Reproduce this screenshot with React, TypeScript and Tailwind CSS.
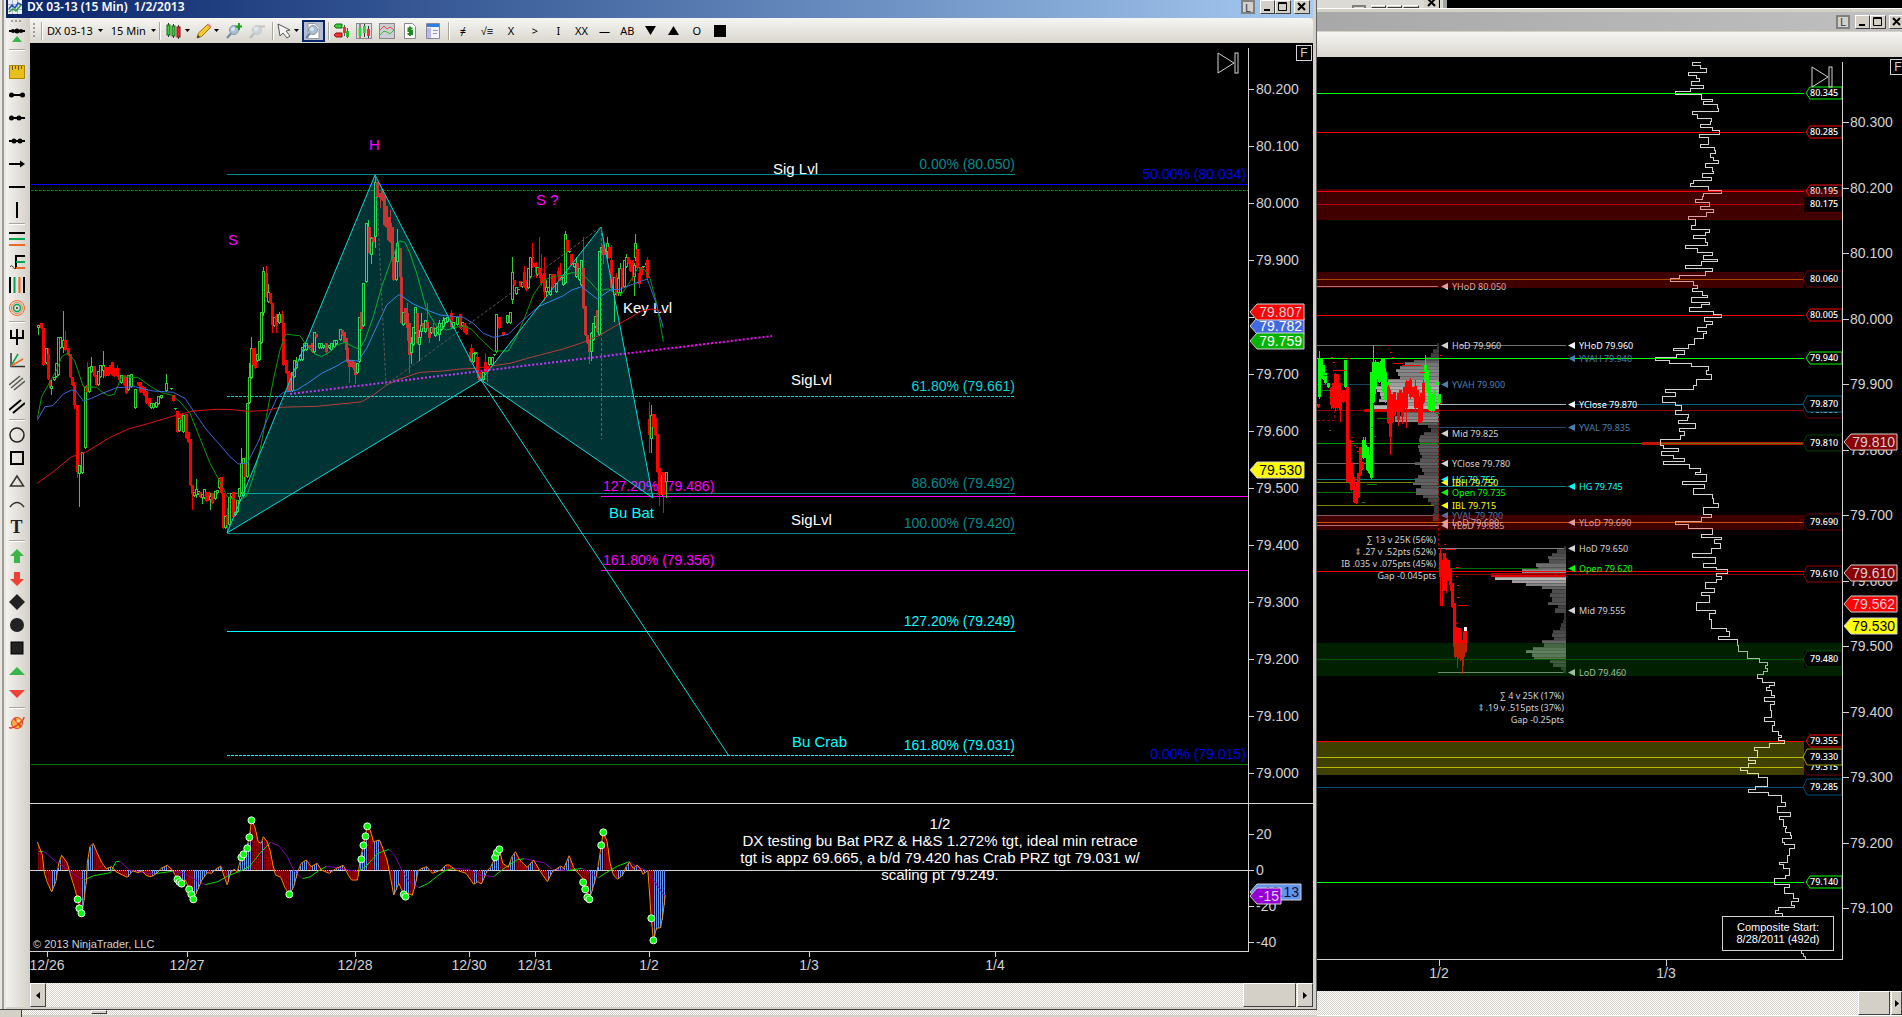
import type { ReactNode } from "react";

type Point = [number, number];
type Projection = (x: number, y: number) => Point;

const LINE_WHITE = "#d3d3d3";

// Recorded samples are in thirds of a pixel, relative to each panel's origin.
const at =
  (ox: number, oy: number, sx = 3, sy = 3): Projection =>
  (x, y) => [ox + x / sx, oy + y / sy];

const early = at(20, 130);
const late = at(400, 180);
const oscillator = at(20, 780, 2.376, 3);
const session = at(1316, 330);

function parse(raw: string): number[][] {
  return raw
    .trim()
    .split(/\s+/)
    .map((pair) => pair.split(",").map(Number));
}

function project(raw: string, to: Projection): Point[] {
  return parse(raw).map(([x, y]) => to(x, y));
}

function toPoints(points: Point[]) {
  return points.map(([x, y]) => `${x.toFixed(1)},${y.toFixed(1)}`).join(" ");
}

/* ---------- left chart data ---------- */

// g|r x,bodyTop,bodyBottom[,wickTop,wickBottom]
const EARLY_BARS = `
g55,585,595,585,613 r64,580,595 r70,595,705 g77,655,700 r83,672,748,655,748 r89,750,775 g94,768,776,750,793 g101,740,750 g107,700,740 g113,622,735
g120,622,655 g130,630,655,543,665 r136,630,660,603,660 r143,655,675 r150,672,742 r157,740,765 r163,765,825,755,835 r171,825,1025,825,1040
g178,1005,1032,1005,1128 g187,965,1030 g195,770,955 r202,765,785,697,785 g208,710,787 g214,707,727,682,727 r221,707,737 r227,735,765
g234,722,765 g240,705,740 g250,705,722,662,740 r256,712,738 r263,710,735 r270,706,730 r275,697,735 r283,713,738 r292,715,738,705,738
r298,735,750 g304,735,760 r311,735,765 r317,740,788 g325,735,780 g332,732,770 g346,778,835 r353,755,765 r359,755,785 r366,768,785
r372,770,795 r379,783,818 r386,805,828 g393,818,835 g400,820,835 g408,815,830 g414,797,822 g422,795,803 g438,758,782,732,782
g454,774,776 r460,795,812 g466,834,836 r472,843,905 g478,865,903 r484,852,870 g490,855,905 r497,852,925 r503,905,937 r509,927,1065
r515,1065,1092,1065,1137 g521,1085,1097 g527,1078,1095,1047,1100 g533,1083,1093 r539,1085,1100 g545,1092,1105,1092,1120 g551,1078,1105 r557,1085,1112
r563,1085,1110 g569,1098,1110,1090,1137 r575,1090,1120 g584,1083,1107 g590,1080,1090 g597,1045,1075 r602,1040,1090 r608,1090,1195
g614,1157,1195 r620,1155,1185,1135,1210 g627,1100,1185 g633,1088,1100 r639,1085,1160 g645,1145,1155 g651,1110,1145 g657,1075,1100,1075,1120
g663,998,1090,953,1090 g670,985,1098 r676,998,1040,982,1075 g682,818,1040 g687,742,820,700,820 g692,655,745,622,745 r700,655,705
r706,690,715,655,715 g712,672,693 g718,632,690 g724,545,640 g730,422,550,412,555 r737,430,500,408,500 g743,485,515,462,515
r749,490,520 r755,520,585,520,605 g761,560,587 r767,558,588,552,605 g773,553,577 g778,553,578,545,578 r785,553,580,543,580 r790,580,705
r797,690,730 r803,723,783 r809,730,783 g816,725,783 g822,690,740 g828,695,715,680,715 g840,675,690 g846,650,690 g853,640,660 g859,640,660
r868,645,655 r875,640,665 g881,605,665 r887,612,620 g898,640,655 g904,640,655 g910,645,655 r918,640,665 g926,645,655 g934,640,660
g941,630,650 g948,630,642 g959,597,630 r965,600,615 r971,605,635 r977,625,660 r982,655,695 r988,690,710,690,757 r995,692,712
r1001,697,720 r1006,710,735,710,760 g1012,700,730 g1018,562,695 r1024,545,597 g1030,460,588 g1037,280,455 g1043,290,330,270,335
r1048,290,370 g1054,325,375,320,400 r1060,320,335 g1066,155,320,140,350 r1072,155,202 r1079,190,205,190,230 r1085,178,210 r1091,195,285
r1097,228,290 r1103,260,330 r1109,280,335,240,335 r1115,290,390 r1120,380,450 g1127,360,450 g1132,340,395,297,420 r1139,355,440`;

const LATE_BARS = `
r0,210,290 r4,292,430 g10,395,435 r16,385,430 r22,400,445,370,480 r28,430,525,430,575 g34,490,520,470,548 g40,440,495 g46,380,460
r52,400,490 g58,470,495,450,540 g64,435,457,400,470 r70,430,445 g76,420,455 r82,425,445,370,445 r88,445,475,445,487 g94,440,460 r100,440,460,430,460
g106,445,468 g112,440,460 g118,430,465,420,480 g124,430,450 g130,420,440,410,445 g136,415,430 g142,410,425 r152,400,440,390,445
g160,425,445 g172,412,435 r180,403,445 g186,425,438 r192,430,455 r198,437,463 r209,515,543 r214,505,530,493,540 g220,520,545 g226,515,522
r232,530,580,515,590 r238,575,600 r244,580,602 g250,575,600 r256,545,575,520,575 r262,560,575,560,603 g268,532,555 g275,530,555 g281,522,524
g287,403,515 r297,412,445 r310,455,465 g322,405,430 g329,395,430 g335,275,360,230,370 r341,300,315 g347,320,343 g353,326,328
r360,302,318 g365,305,320 r371,275,320,258,320 r377,300,330 g383,265,325 g389,232,290 r395,230,235,190,262 r403,250,258 r408,260,280,245,290
g412,262,285 r418,265,285,172,290 r424,285,310,222,315 r431,280,335,230,360 g437,320,335,300,345 g444,320,335 g450,283,345 r456,283,320
r462,283,310 g468,310,335 r473,272,285,262,300 r479,285,300,250,300 g490,290,315 g496,163,310,153,310 r502,180,215 g508,213,215
r514,222,255 g521,250,262 g527,248,290,230,290 r532,250,285 g538,265,300 g544,240,315 r549,265,385,172,385 r555,378,465 r561,465,490
r568,485,515,480,548 g574,458,515,455,540 g580,430,480 g586,407,440 r592,390,455 g598,213,465 g604,200,215 r610,195,225,175,250
r615,208,222 g621,190,215,172,235 r628,200,235 r634,240,325,195,325 g641,290,345,290,423 r647,290,340,280,345 g653,295,340,265,345
g659,265,340,248,345 r665,265,320 g671,240,320 g677,232,260,222,262 r683,232,250 r690,240,272 r696,240,270,240,300 g701,255,290,250,345
g706,190,235,162,240 r712,207,265 r718,280,312,260,320 r724,262,285 g730,258,262 g737,250,255 r742,240,293,232,293
r748,717,765,667,815 g754,705,778,675,815 r760,702,740 r766,715,765,702,765 r772,762,875 r778,865,945,865,975 g785,885,945 r790,875,945,875,995
g797,875,905,875,950`;

const AVERAGES = [
  {
    color: "#00a000",
    early:
      "52,865 65,800 90,755 110,720 125,680 145,668 165,695 190,770 230,772 245,785 265,797 283,793 305,740 355,743 375,757 400,775 430,790 455,795 480,815 510,850 540,925 570,1000 600,1055 622,1100 655,1112 680,1098 700,1040 720,960 740,855 760,750 780,660 797,612 820,615 840,617 860,648 885,672 905,680 930,665 950,645 975,637 1000,650 1018,658 1035,630 1060,560 1085,470 1110,400 1138,333",
    late: "0,183 15,187 30,220 50,280 80,390 110,440 140,450 185,437 215,448 240,475 280,513 325,513 350,470 375,410 400,345 430,300 470,288 495,285 515,278 545,280 570,305 595,333 625,327 645,338 665,342 690,305 715,262 735,270 750,295 770,370 790,485",
  },
  {
    color: "#4169e1",
    early:
      "52,870 75,830 98,827 130,792 155,780 168,783 190,813 215,805 240,793 290,773 345,770 375,778 400,783 460,787 495,805 525,850 560,900 600,945 630,980 655,1002 682,1000 715,935 745,860 770,805 790,787 830,780 870,755 905,730 950,708 980,690 1015,693 1040,655 1070,590 1100,525 1135,495",
    late: "0,345 40,372 80,390 120,405 190,412 220,430 250,460 280,472 325,463 370,420 415,380 490,347 515,330 545,320 570,340 592,357 630,330 660,328 700,312 742,297 765,360 790,443",
  },
  {
    color: "#e01010",
    early:
      "52,1060 100,1025 155,980 200,965 265,925 325,897 380,882 470,855 520,843 590,838 640,839 680,844 735,842 780,832 890,829 1000,818 1025,815 1060,795 1100,765 1138,747",
    late: "0,597 60,577 130,573 180,567 230,565 260,560 330,550 400,530 490,507 550,487 600,465 660,430 725,393 755,387 775,390 790,400",
  },
];

const OSC_LINE = `41,186 53,225 58,280 65,308 75,335 85,305 92,250 99,226 112,248 120,285 130,325 137,358 146,400 150,380 158,300 160,250 166,200
174,190 182,215 195,250 205,266 218,260 228,275 240,283 255,292 268,272 280,278 290,272 300,287 312,290 325,280 335,265 350,256 362,270
374,298 384,310 393,300 402,328 412,358 422,330 432,300 445,278 455,280 465,268 477,258 484,285 492,314 500,280 508,268 516,275 526,232
536,215 545,172 550,121 558,140 566,185 573,190 578,170 587,185 595,215 600,250 607,285 620,292 630,325 640,343 650,320 660,275 668,250
680,240 692,260 706,250 716,270 735,280 750,266 768,256 780,285 788,300 802,300 808,240 816,196 825,139 832,150 840,185 854,180 862,205
872,240 880,290 888,345 900,310 912,343 922,340 932,346 940,310 946,272 955,265 966,260 980,280 1000,270 1012,255 1020,255 1035,270
1060,280 1078,313 1088,305 1096,312 1110,272 1118,262 1129,232 1139,208 1147,250 1160,262 1168,232 1177,215 1187,240 1205,262 1220,240
1235,272 1253,305 1265,275 1285,258 1292,265 1305,227 1315,262 1325,278 1335,292 1343,328 1353,358 1362,320 1370,285 1376,240 1381,196
1386,157 1395,185 1402,250 1410,285 1420,298 1432,285 1440,260 1448,247 1457,265 1466,255 1475,268 1480,283 1488,275 1492,270 1500,415
1505,481 1512,445 1522,443 1528,400 1533,345`;

const OSC_SIGNAL = `45,215 55,214 65,222 85,245 110,265 130,285 152,300 175,287 215,278 228,245 237,244 260,270 290,278 320,281 362,274 385,278
410,295 440,314 470,305 495,287 520,275 545,260 570,220 595,187 615,197 635,230 652,275 672,296 690,290 710,272 728,259 750,262 780,270
805,275 825,255 850,220 877,208 890,225 905,265 925,305 948,323 970,310 990,290 1010,272 1030,265 1065,268 1095,285 1125,290 1150,265
1180,240 1198,236 1245,248 1265,268 1300,272 1335,265 1350,275 1375,293 1390,280 1420,258 1448,245 1465,260 1490,272 1505,300 1533,350`;

const OSC_DOTS = `137,358 141,385 146,400 374,298 379,306 384,311 402,328 407,343 412,358 526,232 531,223 540,205 545,172 550,121 640,343
811,238 816,196 821,169 825,139 912,343 916,350 1129,232 1133,218 1139,208 1338,307 1343,328 1348,352 1353,358 1381,196 1386,157
1500,415 1505,481`;

/* ---------- right chart data ---------- */

const SESSION_BARS = `
g8,88,200,62,205 g14,85,115,85,140 g20,105,148 g26,130,160 g37,160,172 r6,222,232 r45,175,225,170,235 r52,160,235 r57,132,200,130,240 r63,132,235 r68,160,225
r73,190,240,160,272 r80,180,215 g87,90,170 r92,170,455 r98,330,440,330,460 r104,400,480 r110,440,470,430,490 r115,470,515 r121,480,518,455,518 r127,430,500
r131,350,435 r137,395,418 g142,330,385,322,385 g148,345,370,320,380 g154,350,420 g159,375,430 g164,125,445 g170,95,215,45,215 g176,100,170,90,190
g182,95,145 g188,98,155 g194,92,150,85,165 g200,85,185 g206,125,210,115,215 g214,155,165 r217,172,280,165,280 r222,230,320,180,372
r228,192,275 r234,185,255 r240,210,240 r246,190,270,190,285 r252,180,240 r257,195,260,190,280 r263,170,235 r270,155,235,150,292 r277,152,190
r283,150,200,145,205 r290,170,200 r296,168,235,150,240 r302,180,230 r308,200,280 r314,190,272 r320,160,215,150,220 g326,105,150,75,150
g332,120,190 g338,170,240 g344,192,243 g350,192,243,180,243 g355,180,225 g362,155,165 g368,192,222
r371,670,740,655,825 r379,700,740,690,825 r384,670,780 r390,690,740,685,785 r397,690,750 r403,715,765,715,780 r408,760,830 r413,820,950 r418,890,980
r422,930,980,920,1010 r427,895,985 r432,905,965,895,990 r437,935,990,930,1028 r442,930,980,905,1005 r447,895,965`;

const SESSION_MARKS = {
  red: "45,82,3 50,95,4 52,120,36 96,85,5 217,45,4 222,66,4 228,80,3 231,99,29 258,105,56 312,127,14 371,75,4 105,321,3 108,333,4 115,345,4 120,350,5 124,363,8 378,390,4 371,220,5 384,643,5 388,658,29 421,710,5 420,738,4 422,765,5 424,802,5 427,826,23 416,880,4",
  green: "18,181,22 40,200,4 20,136,12 183,265,36 166,290,4 40,300,4 175,318,4 154,462,16 138,516,8 170,485,5 128,372,4 330,275,5 360,248,10 172,462,8",
};

// top, bottom, left edge of each volume row
const PROFILE_1 = `40,58,362 58,70,352 70,80,346 80,90,330 90,97,295 97,107,268 107,117,252 117,127,240 127,137,247 137,147,252 147,157,215 157,167,208
167,177,178 177,187,183 187,197,192 197,207,195 207,217,190 217,225,213 225,237,173 237,247,143 247,257,262 257,267,236 267,277,238
277,285,305 285,295,337 295,305,345 305,315,325 315,325,312 325,335,308 335,345,312 345,355,306 355,365,310 365,375,313 375,385,318
385,395,312 395,405,298 405,415,312 415,425,318 425,435,325 435,445,307 445,455,298 455,465,292 465,475,315 475,495,300 495,505,322
505,515,335 515,525,345 525,550,355 550,572,350`;
const PROFILE_2 = `648,658,743 658,668,722 668,678,708 678,688,695 688,700,700 700,710,660 710,718,665 718,728,617 728,740,525 740,750,538
750,760,588 760,768,630 768,778,678 778,790,707 790,800,703 800,815,707 815,825,697 825,835,725 835,848,717 848,870,745 870,880,740
880,890,735 890,900,732 900,910,712 910,920,708 920,930,715 930,940,678 940,950,685 950,960,650 960,970,630 970,980,648 980,990,655
990,1000,702 1000,1010,710 1010,1020,735 1020,1030,740`;

// x held until y, top to bottom
const COMPOSITE: { to: Projection; raw: string }[] = [
  {
    to: at(1640, 50),
    raw: `180,37 157,46 180,55 197,65 143,76 167,84 178,94 152,105 188,115 150,124 105,132 184,146 215,153 190,163 230,174 233,183 157,192 170,203 213,214 211,223 180,232 217,240
237,253 178,262 203,272 205,283 180,292 223,300 226,310 211,321 219,331 233,340 196,350 215,362 220,370 185,380 213,391 160,400 151,409
205,419 244,430 190,438 187,448 166,457 208,468 181,478 220,487 197,499 145,508 166,526 154,538 208,547 196,556 160,565 196,577 200,586
136,595 172,607 215,616 190,626 232,634 184,646 136,655 217,664 196,676 118,685 91,694 160,706 172,715 157,724 187,734 202,742`,
  },
  {
    to: at(1310, 270, 2.649, 3),
    raw: `1010,95 1056,103 1035,112 1003,124 1068,133 1088,142 1043,152 1065,161 1048,172 1025,182 1048,190 1040,203 1018,222 1000,233 962,241
990,252 970,260 913,271 950,280 1010,288 1055,300 1048,312 1063,328 1022,345 1015,356 940,367 968,377 932,396 968,405 983,420 968,432
1002,442 998,450 975,458 1020,474 977,484 990,494 980,506 928,524 935,535 975,543 930,555 962,565 990,573 935,583 1005,595 1032,605
1020,613 1050,634 985,643 1045,655 1015,672 1065,685 1068,700 1080,712 1042,733 1063,742 1035,752 968,762 1000,773 1065,791 1037,800
1088,808 1070,818 1085,835 1062,850 1013,860 1073,879 1042,890`,
  },
  {
    to: at(1310, 560, 2.649, 3),
    raw: `1075,28 1105,38 1075,47 1088,57 1075,67 1047,85 1070,95 1037,106 1057,127 1022,150 1073,160 1058,178 1063,205 1102,212 1110,227
1082,236 1130,255 1133,274 1158,295 1190,305 1210,315 1205,325 1210,332 1200,343 1185,353 1198,365 1230,375 1215,380 1207,390 1220,405
1228,412 1203,422 1228,432 1218,450 1222,472 1202,482 1230,495 1223,513 1240,525 1247,530 1240,540 1255,550 1215,560 1175,570 1185,590 1160,600 1178,608
1160,620 1140,629 1158,638 1187,650 1210,677 1180,687 1160,697 1213,706 1248,725 1258,738 1238,757 1272,768 1243,778 1253,797 1262,805
1257,815 1272,825 1275,835 1250,845 1255,852 1283,865 1270,885 1263,905 1243,913 1252,924 1270,945 1258,955 1228,972 1270,980 1255,1000
1280,1013 1293,1022 1273,1035 1283,1040 1240,1050 1233,1060 1250,1068`,
  },
];

/* ---------- chart primitives ---------- */

function Bars({
  raw,
  to,
  up,
  hollow,
}: {
  raw: string;
  to: Projection;
  up: string;
  hollow: boolean;
}) {
  return (
    <g shapeRendering="crispEdges">
      {raw
        .trim()
        .split(/\s+/)
        .map((entry) => {
          const rising = entry[0] === "g";
          const [x, top, bottom, high = top, low = bottom] = entry.slice(1).split(",").map(Number);
          const [cx, y1] = to(x, top).map(Math.round);
          const y2 = Math.round(to(x, bottom)[1]);
          const wickTop = Math.round(to(x, high)[1]);
          const wickLow = Math.round(to(x, low)[1]);
          const color = rising ? up : "#ff0000";
          const open = hollow && rising && y2 - y1 > 2;
          return (
            <g key={entry}>
              <rect x={cx} y={wickTop} width={1} height={wickLow - wickTop + 1} fill={color} />
              <rect x={cx - 1} y={y1} width={3} height={Math.max(1, y2 - y1)} fill={color} />
              {open && <rect x={cx} y={y1 + 1} width={1} height={y2 - y1 - 2} fill="#000" />}
            </g>
          );
        })}
    </g>
  );
}

function HLine({
  y,
  x1,
  x2,
  color,
  dash,
  width = 1,
}: {
  y: number;
  x1: number;
  x2: number;
  color: string;
  dash?: string;
  width?: number;
}) {
  return (
    <line
      x1={x1}
      x2={x2}
      y1={y + 0.5}
      y2={y + 0.5}
      stroke={color}
      strokeWidth={width}
      strokeDasharray={dash}
      shapeRendering="crispEdges"
    />
  );
}

// Arrow-shaped price marker that points at the axis
function PriceTag({
  x,
  y,
  width,
  label,
  fill,
  color,
}: {
  x: number;
  y: number;
  width: number;
  label: string;
  fill: string;
  color: string;
}) {
  const right = x + width;
  return (
    <g>
      <polygon
        points={`${x},${y} ${x + 7},${y - 8} ${right},${y - 8} ${right},${y + 8} ${x + 7},${y + 8}`}
        fill={fill}
        stroke={LINE_WHITE}
      />
      <text x={right - 2} y={y + 5} textAnchor="end" fill={color}>
        {label}
      </text>
    </g>
  );
}

function SkipIcon({ x, y }: { x: number; y: number }) {
  return (
    <g fill="none" stroke={LINE_WHITE}>
      <path d={`M${x} ${y}l16 10-16 10z`} />
      <rect x={x + 17} y={y} width={3} height={20} />
    </g>
  );
}

/* ---------- left chart ---------- */

const FIB_LEVELS = [
  { y: 174, label: "0.00% (80.050)", color: "#008b8b" },
  { y: 396, label: "61.80% (79.661)", color: "#00d7d7", dash: "3 1" },
  { y: 493, label: "88.60% (79.492)", color: "#008b8b" },
  { y: 533, label: "100.00% (79.420)", color: "#008b8b" },
  { y: 631, label: "127.20% (79.249)", color: "#00ffff" },
  { y: 755, label: "161.80% (79.031)", color: "#00ffff", dash: "3 1" },
];

const NOTES = [
  { x: 369, y: 150, text: "H", color: "#ff00ff" },
  { x: 228, y: 245, text: "S", color: "#ff00ff" },
  { x: 536, y: 205, text: "S ?", color: "#ff00ff" },
  { x: 773, y: 174, text: "Sig Lvl", color: "#ffffff" },
  { x: 791, y: 385, text: "SigLvl", color: "#ffffff" },
  { x: 791, y: 525, text: "SigLvl", color: "#ffffff" },
  { x: 623, y: 313, text: "Key Lvl", color: "#ffffff" },
  { x: 609, y: 518, text: "Bu Bat", color: "#00ffff" },
  { x: 792, y: 747, text: "Bu Crab", color: "#00ffff" },
];

const COMMENT = [
  "1/2",
  "DX testing bu Bat PRZ & H&S 1.272% tgt, ideal min retrace",
  "tgt is appz 69.665, a b/d 79.420 has Crab PRZ tgt 79.031 w/",
  "scaling pt 79.249.",
];

const DATES: [string, number][] = [
  ["12/26", 47],
  ["12/27", 187],
  ["12/28", 355],
  ["12/30", 469],
  ["12/31", 535],
  ["1/2", 649],
  ["1/3", 809],
  ["1/4", 995],
];

function OscillatorPlot() {
  const line = project(OSC_LINE, oscillator);
  const signal = project(OSC_SIGNAL, oscillator);
  const zero = 870;
  const columns: ReactNode[] = [];

  for (let x = 38, i = 0; x < 665; x += 2) {
    while (i < line.length - 2 && line[i + 1][0] < x) i++;
    const [[ax, ay], [bx, by]] = [line[i], line[i + 1]];
    const y = Math.round(ay + ((by - ay) * Math.min(1, (x - ax) / (bx - ax))));
    columns.push(
      <rect
        key={x}
        x={x}
        y={Math.min(y, zero)}
        width={1}
        height={Math.abs(y - zero)}
        fill={by < ay ? "#6495ed" : "#8b0000"}
      />,
    );
  }

  return (
    <g>
      <HLine y={zero} x1={30} x2={1248} color={LINE_WHITE} />
      <g shapeRendering="crispEdges">{columns}</g>
      {signal.slice(1).map(([x, y], i) => (
        <line
          key={x}
          x1={signal[i][0]}
          y1={signal[i][1]}
          x2={x}
          y2={y}
          stroke={y < signal[i][1] ? "#00e000" : "#8000b0"}
        />
      ))}
      <polyline points={toPoints(line)} fill="none" stroke="#ff8c00" />
      {project(OSC_DOTS, oscillator).map(([x, y]) => (
        <circle key={`${x},${y}`} cx={x} cy={y} r={3.5} fill="#00ff00" stroke="#e8ffe8" />
      ))}
    </g>
  );
}

function PriceChart() {
  return (
    <svg
      viewBox="30 43 1283 940"
      className="block w-full bg-black font-['Liberation_Sans',Arial,sans-serif] text-[14px]"
      role="img"
      aria-label="DX 03-13 15 minute chart"
    >
      <HLine y={184} x1={31} x2={1248} color="#0000ff" />
      <HLine y={190} x1={31} x2={1248} color="#008000" dash="3 1" />
      <HLine y={764} x1={31} x2={1248} color="#008000" />
      {FIB_LEVELS.map((l) => (
        <HLine key={l.label} y={l.y} x1={227} x2={1015} color={l.color} dash={l.dash} />
      ))}
      <HLine y={496} x1={601} x2={1248} color="#ff00ff" />
      <HLine y={570} x1={601} x2={1248} color="#ff00ff" />

      {NOTES.map((n) => (
        <text key={`${n.x}-${n.y}`} x={n.x} y={n.y} fill={n.color} className="text-[15px]">
          {n.text}
        </text>
      ))}
      <g fill="#ff00ff">
        <text x={603} y={491}>127.20% (79.486)</text>
        <text x={603} y={565}>161.80% (79.356)</text>
      </g>

      <Bars raw={EARLY_BARS} to={early} up="#32cd32" hollow />
      <Bars raw={LATE_BARS} to={late} up="#32cd32" hollow />
      {AVERAGES.map((a) => (
        <polyline
          key={a.color}
          points={toPoints([...project(a.early, early), ...project(a.late, late)])}
          fill="none"
          stroke={a.color}
        />
      ))}
      <line x1={290} y1={394} x2={772} y2={336} stroke="#ff00ff" strokeWidth={2} strokeDasharray="2 2" />

      {/* harmonic pattern */}
      <g fill="#00ffff33" stroke="#00dcdc">
        <polygon points="227,533 375,175 481,380" />
        <polygon points="481,380 601,227 653,498" />
        <line x1={481} y1={380} x2={729} y2={756} />
      </g>
      <g fill="none" stroke="#5a5a5a" strokeDasharray="3 2">
        <path d="M376 178 386 385 601 227" />
        <path d="M601.5 228V439" stroke="#3f7474" />
      </g>

      {FIB_LEVELS.map((l) => (
        <text key={l.label} x={1015} y={l.y - 5} textAnchor="end" fill={l.color}>
          {l.label}
        </text>
      ))}
      <g fill="#0000e6" textAnchor="end">
        <text x={1246} y={179}>50.00% (80.034)</text>
        <text x={1246} y={759}>0.00% (79.015)</text>
      </g>

      <OscillatorPlot />
      <g fill="#ffffff" textAnchor="middle" className="text-[15px]">
        {COMMENT.map((line, i) => (
          <text key={line} x={940} y={829 + i * 17}>
            {line}
          </text>
        ))}
      </g>
      <text x={33} y={948} fill={LINE_WHITE} className="text-[11px]">
        © 2013 NinjaTrader, LLC
      </text>

      <g stroke={LINE_WHITE} shapeRendering="crispEdges">
        <path d="M30 803.5H1313M30 951.5H1249M1248.5 48V951" />
      </g>
      <g fill={LINE_WHITE}>
        {Array.from({ length: 13 }, (_, i) => (
          <g key={i}>
            <rect x={1249} y={89 + i * 57} width={5} height={1} />
            <text x={1256} y={94 + i * 57}>
              {(80.2 - i * 0.1).toFixed(3)}
            </text>
          </g>
        ))}
        {[20, 0, -20, -40].map((v, i) => (
          <g key={v}>
            <rect x={1249} y={834 + i * 36} width={5} height={1} />
            <text x={1256} y={839 + i * 36}>
              {v}
            </text>
          </g>
        ))}
        {DATES.map(([label, x]) => (
          <g key={label}>
            <rect x={x} y={952} width={1} height={5} />
            <text x={x} y={970} textAnchor="middle">
              {label}
            </text>
          </g>
        ))}
      </g>

      <PriceTag x={1250} y={326} width={54} label="79.782" fill="#4169e1" color="#ffffff" />
      <PriceTag x={1250} y={312} width={54} label="79.807" fill="#ff0000" color="#d3d3d3" />
      <PriceTag x={1250} y={341} width={54} label="79.759" fill="#00b400" color="#ffffff" />
      <PriceTag x={1250} y={470} width={54} label="79.530" fill="#ffff00" color="#000000" />
      <PriceTag x={1250} y={892} width={51} label="-13.13" fill="#6495ed" color="#101030" />
      <PriceTag x={1250} y={896} width={31} label="-15" fill="#9400d3" color="#e0d0ff" />
      <SkipIcon x={1218} y={53} />
    </svg>
  );
}

/* ---------- right chart ---------- */

const LEVELS = [
  { y: 93, label: "80.345", color: "#00ff00", tag: "small" },
  { y: 132, label: "80.285", color: "#ff0000", tag: "small" },
  { y: 191, label: "80.195", color: "#ff0000", tag: "small" },
  { y: 204, label: "80.175", color: "#a00000", tag: "large", box: "#300000" },
  { y: 279, label: "80.060", color: "#906000", tag: "large", box: "#700000" },
  { y: 315, label: "80.005", color: "#ff0000", tag: "small" },
  { y: 358, label: "79.940", color: "#00ff00", tag: "small" },
  { y: 410, label: "79.860", color: "#900000", tag: "large", box: "#600000" },
  { y: 404, label: "79.870", color: "#00607f", tag: "large" },
  { y: 443, label: "79.810", color: "#00a000", tag: "large", box: "#004000" },
  { y: 522, label: "79.690", color: "#c06a00", tag: "large", box: "#600000" },
  { y: 574, label: "79.610", color: "#900000", tag: "large" },
  { y: 659, label: "79.480", color: "#004800", tag: "large" },
  { y: 741, label: "79.355", color: "#ff0000", tag: "small" },
  { y: 767, label: "79.315", color: "#a0a000", tag: "large", box: "#700000" },
  { y: 757, label: "79.330", color: "#a0a000", tag: "large" },
  { y: 787, label: "79.285", color: "#00507a", tag: "large" },
  { y: 882, label: "79.140", color: "#00ff00", tag: "small" },
];

const REFERENCES = [
  { x: 1441, y: 286, label: "YHoD 80.050", color: "#d3d3d3", line: "#a09090" },
  { x: 1441, y: 345, label: "HoD 79.960", color: "#d3d3d3", line: "#707070" },
  { x: 1441, y: 384, label: "YVAH 79.900", color: "#4682b4", line: "#233f58" },
  { x: 1441, y: 433, label: "Mid 79.825", color: "#d3d3d3" },
  { x: 1441, y: 463, label: "YClose 79.780", color: "#d3d3d3", line: "#707070" },
  { x: 1441, y: 479, label: "HG 79.755", color: "#00ffff", line: "#008080" },
  { x: 1441, y: 482, label: "IBH 79.750", color: "#ffff00", line: "#808000" },
  { x: 1441, y: 492, label: "Open 79.735", color: "#00ff00", line: "#007000" },
  { x: 1441, y: 505, label: "IBL 79.715", color: "#ffff00", line: "#808000" },
  { x: 1441, y: 515, label: "YVAL 79.700", color: "#4682b4", line: "#607080" },
  { x: 1441, y: 522, label: "LoD 79.690", color: "#d3d3d3" },
  { x: 1441, y: 525, label: "YLoD 79.685", color: "#d3d3d3", line: "#a09090" },
  { x: 1568, y: 345, label: "YHoD 79.960", color: "#ffffff", line: "#707070" },
  { x: 1568, y: 358, label: "YVAH 79.940", color: "#4682b4" },
  { x: 1568, y: 404, label: "YClose 79.870", color: "#ffffff", line: "#a0b8c0" },
  { x: 1568, y: 427, label: "YVAL 79.835", color: "#4682b4", line: "#2a4a68" },
  { x: 1568, y: 486, label: "HG 79.745", color: "#00ffff", line: "#008080" },
  { x: 1568, y: 522, label: "YLoD 79.690", color: "#d3d3d3" },
  { x: 1568, y: 548, label: "HoD 79.650", color: "#d3d3d3", line: "#808080" },
  { x: 1568, y: 568, label: "Open 79.620", color: "#00ff00", line: "#007000" },
  { x: 1568, y: 610, label: "Mid 79.555", color: "#d3d3d3" },
  { x: 1568, y: 672, label: "LoD 79.460", color: "#d3d3d3", line: "#909090" },
];

const STATS = [
  { x: 1436, y: 543, lines: ["∑ 13 v 25K (56%)", "‡ .27 v .52pts (52%)", "IB .035 v .075pts (45%)", "Gap -0.045pts"] },
  { x: 1564, y: 699, lines: ["∑ 4 v 25K (17%)", "‡ .19 v .515pts (37%)", "Gap -0.25pts"] },
];

function Profile({ raw, edge, poc }: { raw: string; edge: number; poc: number }) {
  return (
    <g shapeRendering="crispEdges">
      {parse(raw).map(([top, bottom, left]) => {
        const [x, y1] = session(left, top);
        const y2 = session(left, bottom)[1];
        const width = edge - x;
        const shade = Math.round(Math.min(185, 50 + width * 2));
        return (
          <g key={top}>
            <rect
              x={x}
              y={y1}
              width={width}
              height={y2 - y1}
              fill={top === poc ? "#e00000" : `rgb(${shade} ${shade} ${shade})`}
            />
            <rect x={x} y={y1} width={width} height={1} fill="#00000033" />
          </g>
        );
      })}
    </g>
  );
}

function compositePath() {
  let d = "";
  for (const { to, raw } of COMPOSITE) {
    for (const [px, py] of parse(raw)) {
      const [x, y] = to(px, py).map(Math.round);
      d += d ? `H${x + 0.5}V${y + 0.5}` : `M${x + 0.5} ${y + 0.5}`;
    }
  }
  return d;
}

function ProfileChart() {
  return (
    <svg
      viewBox="1317 57 585 934"
      className="block w-full bg-black font-['Liberation_Sans',Arial,sans-serif] text-[14px]"
      role="img"
      aria-label="Volume profile chart"
    >
      {REFERENCES.filter((r) => r.line).map((r) => (
        <HLine
          key={r.label + r.x}
          y={r.y}
          x1={r.x === 1441 ? 1317 : r.y === 345 ? 1460 : 1438}
          x2={r.x === 1441 ? 1438 : 1566}
          color={r.line!}
        />
      ))}

      <Profile raw={PROFILE_1} edge={1439} poc={237} />
      <Profile raw={PROFILE_2} edge={1566} poc={728} />

      {LEVELS.map((l) => (
        <HLine
          key={l.label}
          y={l.y}
          x1={l.label === "79.870" ? 1570 : l.label === "79.610" ? 1440 : 1317}
          x2={1804}
          color={l.color}
        />
      ))}
      <HLine y={571} x1={1317} x2={1804} color="#ff0000" />
      <HLine y={443} x1={1642} x2={1804} color="#c01400" width={3} />
      <HLine y={443} x1={1660} x2={1804} color="#6a7000" />
      <HLine y={410} x1={1364} x2={1438} color="#d00000" width={3} />
      <g fill="none" stroke="#900000" strokeDasharray="3 2" shapeRendering="crispEdges">
        <path d="M1317 420.5H1334V400M1438.5 413V548" />
      </g>

      <Bars raw={SESSION_BARS} to={session} up="#00ff00" hollow={false} />
      {(["red", "green"] as const).map((tone) => (
        <g key={tone} fill={tone === "red" ? "#ff0000" : "#008000"} shapeRendering="crispEdges">
          {parse(SESSION_MARKS[tone]).map(([mx, my, length]) => {
            const [x, y] = session(mx, my);
            return <rect key={`${mx}-${my}`} x={x} y={y} width={length / 3 + 0.5} height={1} />;
          })}
        </g>
      ))}
      <rect x={1464} y={627} width={3} height={4} fill="#ffffff" />

      <path d={compositePath()} fill="none" stroke={LINE_WHITE} shapeRendering="crispEdges" />
      <path d="M1801.5 950.5v3h2v3h2v3" fill="none" stroke={LINE_WHITE} />

      <g className="font-['Noto_Sans','Open_Sans',sans-serif] text-[9px]">
        {REFERENCES.map((r) => (
          <g key={r.label + r.x} fill={r.color}>
            <polygon points={`${r.x},${r.y + 0.5} ${r.x + 7},${r.y - 3} ${r.x + 7},${r.y + 4}`} />
            <text x={r.x + 11} y={r.y + 4}>
              {r.label}
            </text>
          </g>
        ))}
        {STATS.map((block) => (
          <g key={block.x} fill={LINE_WHITE} textAnchor="end">
            {block.lines.map((line, i) => (
              <text key={line} x={block.x} y={block.y + i * 12}>
                {line}
              </text>
            ))}
          </g>
        ))}
        {LEVELS.map((l) => {
          const half = l.tag === "small" ? 6 : 8;
          const tip = l.tag === "small" ? 1806 : 1803;
          return (
            <g key={l.label} className="font-medium">
              <polygon
                points={`${tip},${l.y} ${tip + 4},${l.y - half} 1842,${l.y - half} 1842,${l.y + half} ${tip + 4},${l.y + half}`}
                fill="#000000"
                stroke={l.box ?? l.color}
              />
              <text x={1810} y={l.y + 3} fill="#ffffff">
                {l.label}
              </text>
            </g>
          );
        })}
      </g>

      {/* supply and demand zones tint everything beneath them */}
      <g>
        <rect x={1317} y={189} width={487} height={31} fill="#ff000040" />
        <rect x={1317} y={272} width={487} height={16} fill="#ff000040" />
        <rect x={1317} y={515} width={487} height={15} fill="#ff000040" />
        <rect x={1317} y={643} width={487} height={33} fill="#00800040" />
        <rect x={1317} y={742} width={487} height={33} fill="#ffff0040" />
        <g fill="#ff000040">
          <rect x={1804} y={189} width={38} height={8} />
          <rect x={1804} y={212} width={38} height={8} />
        </g>
        <g fill="#00800040">
          <rect x={1804} y={643} width={38} height={8} />
          <rect x={1804} y={668} width={38} height={8} />
        </g>
      </g>

      <rect x={1722.5} y={916.5} width={111} height={34} fill="#000" stroke={LINE_WHITE} />
      <g fill="#ffffff" textAnchor="middle" className="text-[11px]">
        <text x={1778} y={931}>Composite Start:</text>
        <text x={1778} y={943}>8/28/2011 (492d)</text>
      </g>

      <g stroke={LINE_WHITE} shapeRendering="crispEdges">
        <path d="M1317 959.5H1843M1842.5 62V959M1439.5 960V966M1666.5 960V966" />
      </g>
      <g fill={LINE_WHITE}>
        <text x={1439} y={978} textAnchor="middle">1/2</text>
        <text x={1666} y={978} textAnchor="middle">1/3</text>
        {Array.from({ length: 13 }, (_, i) => (
          <g key={i}>
            <rect x={1843} y={Math.round(122 + i * 65.5)} width={6} height={1} />
            <text x={1850} y={Math.round(127 + i * 65.5)}>
              {(80.3 - i * 0.1).toFixed(3)}
            </text>
          </g>
        ))}
      </g>
      <PriceTag x={1844} y={442} width={53} label="79.810" fill="#8b0000" color="#d3d3d3" />
      <PriceTag x={1844} y={573} width={53} label="79.610" fill="#8b0000" color="#d3d3d3" />
      <PriceTag x={1844} y={604} width={53} label="79.562" fill="#ff0000" color="#d3d3d3" />
      <PriceTag x={1844} y={626} width={53} label="79.530" fill="#ffff00" color="#000000" />
      <SkipIcon x={1812} y={67} />
    </svg>
  );
}

/* ---------- window chrome ---------- */

const RAISED = "border border-t-white border-l-white border-r-[#404040] border-b-[#404040] bg-[#d4d0c8]";

function WindowButtons() {
  return (
    <div className="flex shrink-0 items-center font-['Noto_Sans',sans-serif] text-[11px] leading-none text-black">
      <button
        type="button"
        aria-label="Link"
        className="mr-[5px] flex h-[14px] w-[14px] items-center justify-center border-2 border-[#808080] bg-[#d4d0c8] text-[#203a5a]"
      >
        L
      </button>
      <button type="button" aria-label="Minimize" className={`h-[14px] w-[15px] ${RAISED}`}>
        <svg viewBox="0 0 13 12" className="block">
          <rect x={3} y={8} width={6} height={2} />
        </svg>
      </button>
      <button type="button" aria-label="Maximize" className={`mr-[3px] h-[14px] w-[16px] ${RAISED}`}>
        <svg viewBox="0 0 14 12" className="block" fill="none" stroke="#000">
          <path d="M2.5 1.5h8v8h-8zM2.5 2.5h8" />
        </svg>
      </button>
      <button type="button" aria-label="Close" className={`h-[14px] w-[16px] ${RAISED}`}>
        <svg viewBox="0 0 14 12" className="block" stroke="#000" strokeWidth={2}>
          <path d="M3 2l7 7M10 2L3 9" />
        </svg>
      </button>
    </div>
  );
}

function ScrollBar({ arrows }: { arrows: "both" | "end" }) {
  return (
    <div className="flex h-6 bg-[repeating-conic-gradient(#ffffff_0_25%,#d4d0c8_0_50%)] bg-[length:2px_2px]">
      {arrows === "both" && (
        <button type="button" aria-label="Scroll left" className={`flex w-4 items-center justify-center ${RAISED}`}>
          <svg viewBox="0 0 4 7" className="h-[7px] w-1">
            <path d="M4 0v7L0 3.5z" />
          </svg>
        </button>
      )}
      <div className={`ml-auto ${arrows === "both" ? "w-[53px]" : "w-8"} ${RAISED}`} />
      <button
        type="button"
        aria-label="Scroll right"
        className={`ml-px flex shrink-0 items-center justify-center ${arrows === "both" ? "w-4" : "w-[11px]"} ${RAISED}`}
      >
        <svg viewBox="0 0 4 7" className="h-[7px] w-1">
          <path d="M0 0v7l4-3.5z" />
        </svg>
      </button>
    </div>
  );
}

function FixedScaleButton({ className }: { className: string }) {
  return (
    <button
      type="button"
      aria-label="Fixed scale"
      className={`absolute flex h-4 w-4 items-center justify-center border border-[#d3d3d3] bg-black font-['Liberation_Sans',Arial,sans-serif] text-[12px] leading-none text-[#d3d3d3] ${className}`}
    >
      F
    </button>
  );
}

function Caret() {
  return (
    <svg viewBox="0 0 5 3" className="h-[3px] w-[5px]">
      <path d="M0 0h5L2.5 3z" />
    </svg>
  );
}

function Divider() {
  return <span className="h-[18px] w-[2px] border-r border-l border-r-white border-l-[#a8a59c]" />;
}

const magnifier = (
  <>
    <circle cx={8} cy={7} r={4.5} fill="#a9bfd6" stroke="#8a96a3" />
    <circle cx={7} cy={6} r={2} fill="#dbe7f3" />
    <path d="M5 10.5l-4 4.5" stroke="#6d89a8" strokeWidth={2} />
  </>
);

const icons: Record<string, ReactNode> = {
  candles: (
    <>
      <path d="M2.5 0v14M7.5 1v14M12.5 2v14" stroke="#333" />
      <rect x={1} y={2} width={3} height={10} fill="#39d339" stroke="#176617" />
      <rect x={6} y={3} width={3} height={10} fill="#39d339" stroke="#176617" />
      <rect x={11} y={4} width={3} height={10} fill="#f03030" stroke="#7a1010" />
    </>
  ),
  pencil: (
    <>
      <path d="M1 15l1.5-5L12 1l3 3-9.5 9.5z" fill="#f8c92c" stroke="#9a7400" />
      <path d="M11 2l3 3 1.500-1.500-3-3z" fill="#e88080" />
      <path d="M1 15l1-3 2 2z" fill="#333" />
    </>
  ),
  zoomIn: (
    <>
      {magnifier}
      <path d="M13 0v7M9.5 3.5h6.5" stroke="#12a512" strokeWidth={2} />
    </>
  ),
  zoomOut: (
    <g opacity={0.4}>
      {magnifier}
      <path d="M10 3.5h6" stroke="#888" strokeWidth={2} />
    </g>
  ),
  cursor: <path d="M2 1l2 12 3-3 4 5 3-2-4-5 4-1z" fill="#f5f5f5" stroke="#555" />,
  zoomPage: (
    <>
      <path d="M3 .5h7l4 4v11H3z" fill="#fff" stroke="#999" />
      {magnifier}
    </>
  ),
  trader: (
    <>
      <path d="M11.5 2v11M14.5 5v10" stroke="#555" />
      <path d="M1 3l2-2h6v4H3z" fill="#3bd23b" stroke="#176617" />
      <path d="M1 12l2-2h6v4H3z" fill="#f33" stroke="#811" />
      <rect x={10} y={4} width={3} height={6} fill="#e33" />
      <rect x={13} y={8} width={3} height={6} fill="#2b2" />
    </>
  ),
  series: (
    <>
      <rect x={0.5} y={0.5} width={15} height={15} fill="#ddd" stroke="#888" />
      <path d="M4 1v14M8.5 1v13M12.5 3v12" stroke="#333" />
      <rect x={2.5} y={5} width={3} height={8} fill="#39d339" />
      <rect x={7} y={3} width={3} height={7} fill="#39d339" />
      <rect x={11} y={6} width={3} height={7} fill="#e33" />
    </>
  ),
  indicator: (
    <>
      <rect x={0.5} y={0.5} width={15} height={15} fill="#cdcdd6" stroke="#888" />
      <path d="M1 7l4-4 3 3 3-2 4 3" fill="none" stroke="#e44" />
      <path d="M1 12l4-4 3 1 3 2 4-4" fill="none" stroke="#3b3" />
    </>
  ),
  dollar: (
    <>
      <path d="M2.5.5h8l3 3v12h-11z" fill="#fff" stroke="#888" />
      <path d="M10.5 5.5h-4v2.500h3.500v3h-4.500M8 3.500v9.500" fill="none" stroke="#1f8c1f" strokeWidth={2} />
    </>
  ),
  properties: (
    <>
      <path d="M1.5.5h13v15h-13z" fill="#f4f4ff" stroke="#889" />
      <rect x={2} y={1} width={12} height={3} fill="#2f7de0" />
      <rect x={2} y={5} width={4} height={10} fill="#b9b9f5" />
      <path d="M8 7.5h5M8 10.5h4" stroke="#99a" />
    </>
  ),
};

function Icon({ name }: { name: string }) {
  return (
    <svg viewBox="0 0 16 16" className="h-4 w-4 shrink-0" fill="none">
      {icons[name]}
    </svg>
  );
}

const SHORTCUTS: { label: string; text: ReactNode; width: string }[] = [
  { label: "Not equal", text: "≠", width: "w-6" },
  { label: "Root", text: "√≡", width: "w-6" },
  { label: "X", text: "X", width: "w-6" },
  { label: "Greater", text: ">", width: "w-6" },
  { label: "I", text: "I", width: "w-[23px]" },
  { label: "XX", text: "XX", width: "w-[23px]" },
  { label: "Dash", text: "—", width: "w-[23px]" },
  { label: "AB", text: "AB", width: "w-[23px]" },
  { label: "Down", text: <svg viewBox="0 0 11 9" className="h-[9px] w-[11px]"><path d="M0 0h11L5.5 9z" /></svg>, width: "w-[23px]" },
  { label: "Up", text: <svg viewBox="0 0 11 9" className="h-[9px] w-[11px]"><path d="M0 9h11L5.5 0z" /></svg>, width: "w-[23px]" },
  { label: "O", text: "O", width: "w-6" },
  { label: "Block", text: <span className="h-3 w-3 bg-black" />, width: "w-[23px]" },
];

function Toolbar() {
  return (
    <div className="flex h-[25px] items-center overflow-hidden rounded-r-sm bg-linear-to-b from-[#f6f5f2] to-[#d9d6ce] pl-[3px] font-['Noto_Sans',sans-serif] text-[11px] leading-none whitespace-nowrap text-black">
      <span className="h-4 w-[2px] bg-[repeating-linear-gradient(#a09d94_0_2px,transparent_2px_4px)]" />
      <span className="ml-[6px] flex"><Divider /></span>
      <button type="button" className="ml-1 flex items-center gap-[5px]">
        DX 03-13 <Caret />
      </button>
      <button type="button" className="ml-2 flex items-center gap-[5px]">
        15 Min <Caret />
      </button>
      <span className="ml-[3px] flex"><Divider /></span>
      <button type="button" aria-label="Chart style" className="ml-[5px] flex items-center gap-[3px]">
        <Icon name="candles" /> <Caret />
      </button>
      <button type="button" aria-label="Drawing tools" className="ml-[6px] flex items-center gap-[2px]">
        <Icon name="pencil" /> <Caret />
      </button>
      <button type="button" aria-label="Zoom in" className="ml-[7px]"><Icon name="zoomIn" /></button>
      <button type="button" aria-label="Zoom out" className="ml-[7px]"><Icon name="zoomOut" /></button>
      <span className="ml-[7px] flex"><Divider /></span>
      <button type="button" aria-label="Cursor" className="ml-[2px] flex items-center gap-[2px]">
        <Icon name="cursor" /> <Caret />
      </button>
      <button
        type="button"
        aria-label="Data box"
        className="ml-[3px] flex h-[22px] w-[23px] items-center justify-center border-2 border-[#0a246a] bg-[#b6bdd2]"
      >
        <Icon name="zoomPage" />
      </button>
      <span className="ml-[3px] flex"><Divider /></span>
      <div className="ml-[3px] flex gap-[7px]">
        {["trader", "series", "indicator", "dollar", "properties"].map((name) => (
          <button key={name} type="button" aria-label={name}>
            <Icon name={name} />
          </button>
        ))}
      </div>
      <span className="ml-[7px] flex"><Divider /></span>
      <div className="ml-px flex">
        {SHORTCUTS.map((s) => (
          <button
            key={s.label}
            type="button"
            aria-label={s.label}
            className={`flex h-5 items-center justify-center ${s.width}`}
          >
            {s.text}
          </button>
        ))}
      </div>
    </div>
  );
}

// Each drawing sits in a 16 × 16 box; null is a group separator.
const DRAWING_TOOLS: ([string, ReactNode] | null)[] = [
  ["Ruler", <><path d="M.5 1.5h15v13H.5z" fill="#e8bf1c" stroke="#a98500" /><path d="M3.5 2v4M6.5 2v3M9.5 2v4M12.5 2v3" stroke="#6b5200" /></>],
  ["Line", <><path d="M1 8h14" stroke="#000" strokeWidth={2} /><circle cx={2.5} cy={8} r={2.5} /><circle cx={13.5} cy={8} r={2.5} /></>],
  ["Ray", <><path d="M1 8h15" stroke="#000" strokeWidth={2} /><circle cx={2.5} cy={8} r={2.5} /><circle cx={10} cy={8} r={2.5} /></>],
  ["Extended line", <><path d="M0 8h16" stroke="#000" strokeWidth={2} /><circle cx={5} cy={8} r={2.5} /><circle cx={11} cy={8} r={2.5} /></>],
  ["Arrow line", <><path d="M0 8h13" stroke="#000" strokeWidth={2} /><path d="M11 4.5L16 8l-5 3.5z" /></>],
  ["Horizontal line", <path d="M0 8h16" stroke="#000" strokeWidth={2} />],
  ["Vertical line", <path d="M8 0v16" stroke="#000" strokeWidth={2} />],
  null,
  ["Retracements", <><path d="M0 2h16" stroke="#000" strokeWidth={2} /><path d="M0 8h16" stroke="#00a651" strokeWidth={2} /><path d="M0 14h16" stroke="#f26522" strokeWidth={2} /></>],
  ["Extensions", <><path d="M7 2h9M7 1v14" stroke="#000" strokeWidth={2} /><path d="M7 8h9" stroke="#00a651" strokeWidth={2} /><path d="M7 14h9" stroke="#f26522" strokeWidth={2} /><path d="M1 13q2-3 3 0t3 1" fill="none" stroke="#444" /></>],
  ["Time extensions", <><path d="M1 0v16M15 0v16" stroke="#000" strokeWidth={2} /><path d="M5.5 0v16" stroke="#00a651" strokeWidth={2} /><path d="M10.5 0v16" stroke="#f26522" strokeWidth={2} /></>],
  ["Fibonacci circle", <g fill="none"><circle cx={8} cy={8} r={7.5} stroke="#f26522" /><circle cx={8} cy={8} r={5.5} stroke="#dc7b50" /><circle cx={8} cy={8} r={3.5} stroke="#00a651" strokeWidth={1.5} /><circle cx={8} cy={8} r={1} fill="#222" /></g>],
  null,
  ["Pitchfork", <path d="M2 1v8h12V1M8 0v16" fill="none" stroke="#000" strokeWidth={2} />],
  ["Gann fan", <><path d="M2 1v13.5h14" fill="none" stroke="#333" strokeWidth={1.5} /><path d="M2 14L9 2" stroke="#00a651" strokeWidth={1.5} /><path d="M2 14L14 7" stroke="#f26522" strokeWidth={1.5} /></>],
  ["Regression channel", <path d="M0 10L11 1M2 13L14 3M5 15L16 6" stroke="#555" strokeWidth={1.5} />],
  ["Trend channel", <path d="M0 12L12 2M4 15L16 5" stroke="#000" strokeWidth={2} />],
  null,
  ["Ellipse", <ellipse cx={8} cy={8} rx={7} ry={7} fill="none" stroke="#222" strokeWidth={1.5} />],
  ["Rectangle", <rect x={2} y={2} width={12} height={12} fill="none" stroke="#000" strokeWidth={2} />],
  ["Triangle", <path d="M8 3l6.500 10h-13z" fill="none" stroke="#333" strokeWidth={1.5} />],
  ["Arc", <path d="M1 11q7-9 14 0" fill="none" stroke="#333" strokeWidth={1.5} />],
  ["Text", "T"],
  null,
  ["Arrow up", <path d="M8 1l7 7h-4v7H5V8H1z" fill="#39b54a" />],
  ["Arrow down", <path d="M8 15l7-7h-4V1H5v7H1z" fill="#ef4136" />],
  ["Diamond", <path d="M8 0l8 8-8 8-8-8z" fill="#222" />],
  ["Dot", <circle cx={8} cy={8} r={7} fill="#222" />],
  ["Square", <rect x={2} y={2} width={12} height={12} fill="#222" stroke="#000" />],
  ["Triangle up", <path d="M8 4l8 8H0z" fill="#39b54a" />],
  ["Triangle down", <path d="M8 12l8-8H0z" fill="#ef4136" />],
  null,
  ["Remove drawings", <><circle cx={8} cy={8} r={5.5} fill="#f9b43c" stroke="#e8402a" /><path d="M0 12c1 4 15-5 15-10" fill="none" stroke="#e8402a" strokeWidth={1.5} /><path d="M5 3l7 9" stroke="#e8402a" strokeWidth={2} /><circle cx={9} cy={6} r={1.5} fill="#fff0a8" /></>],
];

function DrawingPalette() {
  return (
    <div className="flex w-6 shrink-0 flex-col items-center bg-linear-to-r from-[#f3f2ee] to-[#d4d0c8] pr-[3px]">
      <span className="mt-[2px] h-[2px] w-3 bg-[repeating-linear-gradient(90deg,#a09d94_0_2px,transparent_2px_4px)]" />
      <button type="button" aria-label="Palette" className="mt-[3px] h-[22px]">
        <svg viewBox="0 0 16 22" className="h-[22px] w-4">
          <path d="M0 6h16" stroke="#000" strokeWidth={2} />
          <circle cx={4} cy={6} r={2} />
          <circle cx={8} cy={6} r={2.5} />
          <circle cx={12} cy={6} r={2} />
          <path d="M8 11l5 6H3z" fill="#39b54a" />
        </svg>
      </button>
      <span className="my-[2px] h-[2px] w-4 border-t border-b border-t-[#a8a59c] border-b-white" />
      <span className="h-[7px]" />
      {DRAWING_TOOLS.map((tool, i) =>
        tool ? (
          <button
            key={tool[0]}
            type="button"
            aria-label={tool[0]}
            className="flex h-[23px] w-5 items-center justify-center font-['Liberation_Serif',serif] text-[18px] leading-none font-bold text-[#222]"
          >
            {typeof tool[1] === "string" ? (
              tool[1]
            ) : (
              <svg viewBox="0 0 16 16" className="h-4 w-4">
                {tool[1]}
              </svg>
            )}
          </button>
        ) : (
          <span key={i} className="my-[2px] h-[2px] w-4 border-t border-b border-t-[#a8a59c] border-b-white" />
        ),
      )}
    </div>
  );
}

function MainWindow() {
  return (
    <section className="flex min-w-0 shrink grow-[1317] basis-0 flex-col">
      <div className="flex">
        <div className="w-[6px] shrink-0 border-r-[2px] border-l-[2px] border-r-[#e9e7e2] border-l-[#e9e7e2] bg-[#a09d94]" />
        <div className="min-w-0 flex-1 border-r-[3px] border-b-[2px] border-[#d4d0c8]">
          <header className="flex h-[18px] items-start justify-between bg-linear-to-r from-[#0a246a] to-[#a6caf0] pr-[3px]">
            <div className="flex h-[14px] items-center gap-[5px] pl-[2px]">
              <svg viewBox="0 0 14 14" className="h-[14px] w-[14px]">
                <rect width={14} height={14} fill="#e8eef4" />
                <path d="M0 4.5h14M0 9.5h14M4.5 0v14M9.5 0v14" stroke="#a9b6c4" />
                <path d="M1 9l3-4 3 3 3-5 4 2" fill="none" stroke="#2458b8" strokeWidth={1.5} />
                <path d="M1 12l4-3 3 2 5-6" fill="none" stroke="#2a9d3a" strokeWidth={1.5} />
              </svg>
              <h1 className="font-['Noto_Sans',sans-serif] text-[12px] leading-none font-semibold whitespace-pre text-white">
                {"DX 03-13 (15 Min)  1/2/2013"}
              </h1>
            </div>
            <WindowButtons />
          </header>
          <div className="flex">
            <DrawingPalette />
            <div className="min-w-0 flex-1">
              <Toolbar />
              <div className="relative">
                <PriceChart />
                <FixedScaleButton className="top-[2px] right-px" />
              </div>
              <ScrollBar arrows="both" />
            </div>
          </div>
        </div>
        <div className="w-px shrink-0 bg-[#606060]" />
      </div>
      <div className="flex min-h-[7px] flex-1 border-t border-[#404040] bg-[#d4d0c8]">
        <div className="w-[22px] border-r border-[#404040]" />
        <div className="flex-1 border-b-[2px] border-[#d4d0c8] bg-[repeating-conic-gradient(#ffffff_0_25%,#d4d0c8_0_50%)] bg-[length:2px_2px] pl-[69px]">
          <div className={`h-1 w-4 ${RAISED}`} />
        </div>
      </div>
    </section>
  );
}

function ProfileWindow() {
  return (
    <section className="flex min-w-0 shrink grow-[585] basis-0 flex-col overflow-hidden bg-[#d4d0c8]">
      {/* edge of the window behind */}
      <div className="flex h-2 items-end bg-black">
        <div className="flex h-2 w-[130px] items-end justify-end gap-px overflow-hidden border-r-[4px] border-[#a0a0a0] bg-[#dcdad5] pr-[3px]">
          <span className="h-[3px] w-[14px] border-2 border-b-0 border-[#808080]" />
          <span className={`ml-1 h-[3px] w-[15px] ${RAISED}`} />
          <span className={`h-[3px] w-[15px] ${RAISED}`} />
          <span className={`h-[3px] w-4 ${RAISED}`} />
          <svg viewBox="0 0 16 8" className="ml-1 h-2 w-4 bg-[#d4d0c8]" stroke="#000" strokeWidth={2}>
            <path d="M4 6l7-7M11 6L4-1" />
            <path d="M15.5 0v8" strokeWidth={1} />
          </svg>
        </div>
      </div>
      <div className="h-1 border-b-[3px] border-b-[#d4d0c8] bg-white" />
      <header className="flex h-[20px] items-center justify-end border-b border-[#d4d0c8] bg-linear-to-r from-[#a8a8a8] to-[#c0c0c0]">
        <div className="-mr-[3px]">
          <WindowButtons />
        </div>
      </header>
      <div className="h-[25px] bg-linear-to-b from-[#f6f5f2] to-[#d9d6ce]" />
      <div className="relative overflow-hidden">
        <ProfileChart />
        <FixedScaleButton className="top-[2px] -right-1" />
      </div>
      <ScrollBar arrows="end" />
      <div className="flex-1 border-t border-white bg-[#d4d0c8]" />
    </section>
  );
}

export default function App() {
  return (
    <main className="flex min-h-screen overflow-hidden bg-[#d4d0c8]">
      <MainWindow />
      <ProfileWindow />
    </main>
  );
}
